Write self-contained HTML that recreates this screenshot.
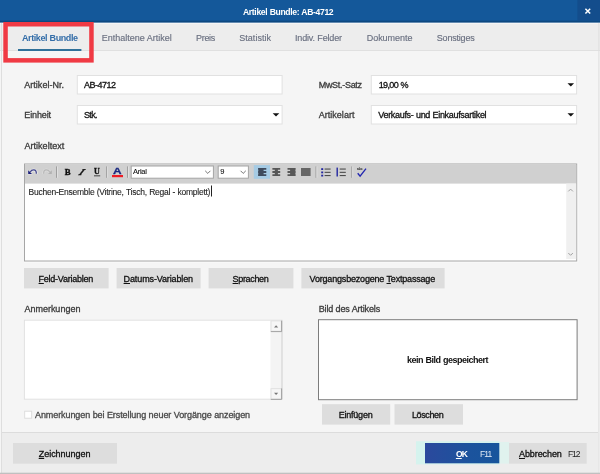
<!DOCTYPE html>
<html lang="de">
<head>
<meta charset="utf-8">
<title>Artikel Bundle: AB-4712</title>
<style>
html,body{margin:0;padding:0;}
body{width:600px;height:474px;overflow:hidden;background:#f5f5f5;font-family:"Liberation Sans",sans-serif;font-size:9px;color:#333;position:relative;}
.abs{position:absolute;}
.t{position:absolute;white-space:nowrap;line-height:12px;-webkit-text-stroke:0.3px currentColor;}
u{text-decoration:underline;text-underline-offset:1px;text-decoration-thickness:0.8px;}
</style>
</head>
<body>
<svg class="abs" style="left:0;top:0;will-change:transform" width="600" height="474" viewBox="0 0 600 474">
<!-- window background -->
<rect x="0" y="0" width="600" height="474" fill="#f5f5f5"/>
<!-- title bar -->
<rect x="0" y="0" width="600" height="22.7" fill="#14589a"/>
<rect x="0" y="20.7" width="600" height="2" fill="#0c4880"/>
<rect x="577.4" y="0" width="22.6" height="20.7" fill="#134d8c"/>
<path d="M585.4 8.7L590.2 13.5M590.2 8.7L585.4 13.5" stroke="#fff" stroke-width="1.5" fill="none"/>
<!-- tab bar -->
<rect x="0" y="22.7" width="600" height="1" fill="#fafafa"/>
<rect x="0" y="23.7" width="600" height="26.3" fill="#ededed"/>
<rect x="0" y="50" width="600" height="1" fill="#e0e0e0"/>
<rect x="18" y="49" width="63.4" height="2" fill="#2f7099"/>
<!-- window borders -->
<rect x="1" y="23" width="1" height="451" fill="#dedede"/>
<rect x="598.4" y="23" width="1" height="451" fill="#dedede"/>

<!-- inputs -->
<g fill="#fff" stroke="#e1e1e1" stroke-width="1">
<rect x="77.3" y="75.5" width="204.8" height="18.5"/>
<rect x="371.3" y="75.5" width="205.3" height="18.5"/>
<rect x="77.3" y="105.5" width="204.8" height="18.5"/>
<rect x="371.3" y="105.5" width="205.3" height="18.5"/>
</g>
<g fill="#111">
<path d="M567.5 83.2h6.6l-3.3 3.4z"/>
<path d="M272.7 113.2h6.6l-3.3 3.4z"/>
<path d="M567.5 113.2h6.6l-3.3 3.4z"/>
</g>

<!-- editor -->
<path d="M24 262H577.7V163.5" fill="none" stroke="#fcfcfc" stroke-width="1"/>
<rect x="24.5" y="164" width="552.2" height="97" fill="#fff" stroke="#a6a6a6" stroke-width="1"/>
<rect x="25" y="164.5" width="551.2" height="19.1" fill="#d0d0d0"/>
<rect x="566.2" y="183.6" width="10" height="75.4" fill="#f0f0f0"/>
<path d="M568.3 191.4L570.6 189.1L572.9 191.4M568.3 253L570.6 255.3L572.9 253" fill="none" stroke="#a2a2a2" stroke-width="1"/>
<rect x="211" y="185.5" width="1" height="11" fill="#222"/>
<g font-family="Liberation Serif, serif">
<!-- undo -->
<path d="M30.2 172 C31.6 169.4 36.6 168.4 36.3 173.8" fill="none" stroke="#eeeeee" stroke-width="3" opacity="0.75"/>
<path d="M27.7 169.6V174.5H32.6Z" fill="#eeeeee" opacity="0.75"/>
<path d="M28.2 170.2V174H32Z" fill="#1c1f7a"/>
<path d="M30.2 172 C31.6 169.4 36.6 168.4 36.3 173.8" fill="none" stroke="#44488f" stroke-width="1.3"/>
<!-- redo -->
<path d="M49.8 172 C48.4 169.4 43.4 168.4 43.7 173.8" fill="none" stroke="#dedede" stroke-width="3" opacity="0.7"/>
<path d="M51.8 170.2V174H48Z" fill="#b2b2b2"/>
<path d="M49.8 172 C48.4 169.4 43.4 168.4 43.7 173.8" fill="none" stroke="#b8b8b8" stroke-width="1.3"/>
<!-- separators -->
<path d="M56.6 166.4V177.8M106.7 166.4V177.8M127.6 166.4V177.8M316 166.4V177.8M351.8 166.4V177.8" stroke="#9a9a9a" stroke-width="1" fill="none"/>
<path d="M57.5 166.4V177.8M107.6 166.4V177.8M128.5 166.4V177.8M316.9 166.4V177.8M352.7 166.4V177.8" stroke="#e4e4e4" stroke-width="0.8" fill="none"/>
<!-- B I U -->
<text x="64.8" y="174.7" font-size="8.8" font-weight="bold" fill="#111" stroke="#111" stroke-width="0.35">B</text>
<text x="0" y="0" font-size="8.8" font-weight="bold" fill="#111" stroke="#111" stroke-width="0.5" transform="translate(78,174.7) skewX(-38)">I</text>
<text x="94" y="174.2" font-size="8" font-weight="bold" fill="#111" stroke="#111" stroke-width="0.3">U</text>
<rect x="94" y="175.4" width="6.2" height="0.9" fill="#333"/>
<!-- A colour -->
<text x="112.9" y="174" font-size="9.4" font-weight="bold" font-family="Liberation Sans, sans-serif" fill="#1b2a80" stroke="#1b2a80" stroke-width="0.3" textLength="8.6" lengthAdjust="spacingAndGlyphs">A</text>
<rect x="112" y="175" width="11" height="2.2" fill="#ee1c24"/>
<!-- combos -->
<rect x="131.2" y="166" width="82.2" height="12.2" fill="#fff" stroke="#a4a4a4" stroke-width="1"/>
<path d="M205.2 170.8L207.8 173.4L210.4 170.8" fill="none" stroke="#666" stroke-width="0.9"/>
<rect x="218.2" y="166" width="30.2" height="12.2" fill="#fff" stroke="#a4a4a4" stroke-width="1"/>
<path d="M240.6 170.8L243.2 173.4L245.8 170.8" fill="none" stroke="#666" stroke-width="0.9"/>
<!-- align buttons -->
<rect x="253.8" y="165.1" width="16.2" height="13.7" fill="#a6cbe4"/>
<g fill="#3f4b5d">
<path d="M258.3 168h8v1.8h-8zM258.3 171.1h8v1.8h-8zM258.3 174.2h8v1.8h-8z"/>
<rect x="258.3" y="168" width="5.3" height="8"/>
</g>
<g fill="#585858">
<path d="M272.4 168h7.8v1.8h-7.8zM272.4 171.1h7.8v1.8h-7.8zM272.4 174.2h7.8v1.8h-7.8z"/>
<rect x="274.8" y="168" width="3.1" height="8"/>
<path d="M287.5 168h7.9v1.8h-7.9zM287.5 171.1h7.9v1.8h-7.9zM287.5 174.2h7.9v1.8h-7.9z"/>
<rect x="290.1" y="168" width="5.3" height="8"/>
<rect x="301" y="168" width="9.6" height="8" fill="#666"/>
</g>
<!-- bullet list / numbered list -->
<g fill="#2226a0">
<rect x="321.2" y="168.2" width="2" height="1.8"/><rect x="321.2" y="171.5" width="2" height="1.8"/><rect x="321.2" y="174.7" width="2" height="1.8"/>
<rect x="336.5" y="167.6" width="1.4" height="8.9"/>
</g>
<g fill="#4c4c4c">
<rect x="324.6" y="168.5" width="6" height="1.1"/><rect x="324.6" y="171.8" width="6" height="1.1"/><rect x="324.6" y="175" width="6" height="1.1"/>
<rect x="339.7" y="168.5" width="6.1" height="1.1"/><rect x="339.7" y="171.8" width="6.1" height="1.1"/><rect x="339.7" y="175" width="6.1" height="1.1"/>
</g>
<!-- spell check -->
<text x="357" y="170.4" font-size="4.4" font-weight="bold" font-family="Liberation Sans, sans-serif" fill="#222" textLength="5.6" lengthAdjust="spacingAndGlyphs">abc</text>
<path d="M357.7 173.3L360.1 176.2L366 168.7" fill="none" stroke="#2226b0" stroke-width="1.35"/>
</g>


<!-- buttons row -->
<g fill="#dddddd">
<rect x="24" y="268" width="84.6" height="20.4"/>
<rect x="116.6" y="268" width="84" height="20.4"/>
<rect x="208.6" y="268" width="84.8" height="20.4"/>
<rect x="301.4" y="268" width="143.2" height="20.4"/>
<rect x="322" y="404.2" width="68.2" height="20.4"/>
<rect x="394.5" y="404.2" width="68.5" height="20.4"/>
<rect x="13" y="443" width="104" height="20.7"/>
</g>

<!-- Anmerkungen -->
<rect x="24.4" y="320.2" width="257.6" height="79" fill="#fff" stroke="#e1e1e1" stroke-width="1"/>
<rect x="270.5" y="320.7" width="11" height="78" fill="#f4f4f4"/>
<g fill="#f6f6f6" stroke="#dcdcdc" stroke-width="0.8">
<rect x="271" y="320.9" width="10.3" height="10.3"/>
<rect x="271" y="388.7" width="10.3" height="10.3"/>
</g>
<path d="M281.9 320.7V399.2" stroke="#d2d2d2" stroke-width="0.9" fill="none"/>
<path d="M281.6 320.7V331.6H270.8M281.6 388.4V399.4H270.8" stroke="#9a9a9a" stroke-width="0.9" fill="none"/>
<path d="M274 327.6h4.2l-2.1-2.3zM274 392.8h4.2l-2.1 2.3z" fill="#777"/>
<rect x="24.7" y="411.2" width="7" height="7" fill="#fff" stroke="#dadada" stroke-width="0.9"/>

<!-- Bild -->
<rect x="318.5" y="319.7" width="258.6" height="80" fill="#fff" stroke="#7c7c7c" stroke-width="1"/>

<!-- footer -->
<rect x="2" y="432.5" width="596" height="40.5" fill="#ededed"/>
<rect x="2" y="432" width="596" height="1" fill="#dcdcdc"/>
<rect x="0" y="472.7" width="600" height="1.3" fill="#c0c0c0"/>
<rect x="13" y="443" width="104" height="20.7" fill="#dddddd"/>
<rect x="499" y="442" width="10.2" height="21.6" fill="#e0f2ee"/>
<rect x="416" y="441.2" width="83.3" height="23.2" fill="#d5f3ee"/>
<defs><linearGradient id="okg" x1="0" x2="1" y1="0" y2="0"><stop offset="0" stop-color="#2b499d"/><stop offset="0.6" stop-color="#1b539d"/><stop offset="1" stop-color="#17559c"/></linearGradient></defs>
<rect x="425" y="443" width="74.3" height="20.3" fill="url(#okg)"/>
<rect x="509" y="443" width="77.7" height="20.7" fill="#dddddd"/>

<!-- red highlight -->
<rect x="5.55" y="24.25" width="85.9" height="36.1" fill="none" stroke="#f03a44" stroke-width="4.5"/>
</svg>

<div id="txt" class="abs" style="left:0;top:0;width:600px;height:474px;will-change:transform;">
<div class="t" style="left:243.0px;top:6.4px;font-size:8.6px;letter-spacing:-0.347px;word-spacing:0.347px;color:#fff;font-weight:bold;-webkit-text-stroke:0;">Artikel Bundle: AB-4712</div>
<div class="t" style="left:22.0px;top:31.9px;font-size:9px;letter-spacing:-0.417px;word-spacing:0.417px;color:#336da8;font-weight:bold;-webkit-text-stroke:0;">Artikel Bundle</div>
<div class="t" style="left:101.7px;top:31.9px;font-size:9px;letter-spacing:-0.003px;word-spacing:0.003px;color:#6a7080;-webkit-text-stroke:0.15px;">Enthaltene Artikel</div>
<div class="t" style="left:196.0px;top:31.9px;font-size:9px;letter-spacing:-0.303px;color:#6a7080;-webkit-text-stroke:0.15px;">Preis</div>
<div class="t" style="left:239.3px;top:31.9px;font-size:9px;letter-spacing:0.020px;color:#6a7080;-webkit-text-stroke:0.15px;">Statistik</div>
<div class="t" style="left:295.0px;top:31.9px;font-size:9px;letter-spacing:-0.172px;word-spacing:0.172px;color:#6a7080;-webkit-text-stroke:0.15px;">Indiv. Felder</div>
<div class="t" style="left:366.7px;top:31.9px;font-size:9px;letter-spacing:-0.026px;color:#6a7080;-webkit-text-stroke:0.15px;">Dokumente</div>
<div class="t" style="left:436.8px;top:31.9px;font-size:9px;letter-spacing:-0.203px;color:#6a7080;-webkit-text-stroke:0.15px;">Sonstiges</div>
<div class="t" style="left:24.3px;top:79.3px;font-size:9px;letter-spacing:0.017px;color:#3a3a3a;">Artikel-Nr.</div>
<div class="t" style="left:84.0px;top:79.3px;font-size:9px;letter-spacing:-0.504px;color:#111;">AB-4712</div>
<div class="t" style="left:318.7px;top:79.3px;font-size:9px;letter-spacing:-0.292px;color:#3a3a3a;">MwSt.-Satz</div>
<div class="t" style="left:378.7px;top:79.3px;font-size:9px;letter-spacing:-0.622px;word-spacing:0.622px;color:#111;">19,00 %</div>
<div class="t" style="left:24.3px;top:109.3px;font-size:9px;letter-spacing:-0.119px;color:#3a3a3a;">Einheit</div>
<div class="t" style="left:84.0px;top:109.3px;font-size:9px;letter-spacing:-0.629px;color:#111;">Stk.</div>
<div class="t" style="left:318.7px;top:109.3px;font-size:9px;letter-spacing:0.028px;color:#3a3a3a;">Artikelart</div>
<div class="t" style="left:378.3px;top:109.3px;font-size:9px;letter-spacing:-0.317px;word-spacing:0.317px;color:#111;">Verkaufs- und Einkaufsartikel</div>
<div class="t" style="left:24.4px;top:139.5px;font-size:9px;letter-spacing:0.044px;color:#3a3a3a;">Artikeltext</div>
<div class="t" style="left:133.0px;top:166.4px;font-size:7.5px;letter-spacing:-0.303px;color:#111;-webkit-text-stroke:0.1px;">Arial</div>
<div class="t" style="left:220.2px;top:166.4px;font-size:7.5px;letter-spacing:-0.372px;color:#111;-webkit-text-stroke:0.1px;">9</div>
<div class="t" style="left:28.6px;top:186.4px;font-size:8.5px;letter-spacing:-0.244px;word-spacing:0.244px;color:#222;-webkit-text-stroke:0.1px;">Buchen-Ensemble (Vitrine, Tisch, Regal - komplett)</div>
<div class="t" style="left:38.6px;top:273.1px;font-size:9px;letter-spacing:-0.248px;color:#111;"><u>F</u>eld-Variablen</div>
<div class="t" style="left:123.6px;top:273.1px;font-size:9px;letter-spacing:-0.123px;color:#111;"><u>D</u>atums-Variablen</div>
<div class="t" style="left:232.6px;top:273.1px;font-size:9px;letter-spacing:-0.343px;color:#111;"><u>S</u>prachen</div>
<div class="t" style="left:309.6px;top:273.1px;font-size:9px;letter-spacing:-0.187px;word-spacing:0.187px;color:#111;">Vorgangsbezogene <u>T</u>extpassage</div>
<div class="t" style="left:24.4px;top:302.9px;font-size:9px;letter-spacing:-0.004px;color:#3a3a3a;">Anmerkungen</div>
<div class="t" style="left:318.7px;top:302.9px;font-size:9px;letter-spacing:-0.149px;word-spacing:0.149px;color:#3a3a3a;">Bild des Artikels</div>
<div class="t" style="left:407.0px;top:354.2px;font-size:9px;letter-spacing:-0.502px;word-spacing:0.502px;color:#111;font-weight:bold;-webkit-text-stroke:0;">kein Bild gespeichert</div>
<div class="t" style="left:35.0px;top:408.9px;font-size:9px;letter-spacing:-0.081px;word-spacing:0.081px;color:#484848;">Anmerkungen bei Erstellung neuer Vorgänge anzeigen</div>
<div class="t" style="left:338.7px;top:408.9px;font-size:9px;letter-spacing:-0.216px;color:#111;">Einfügen</div>
<div class="t" style="left:412.0px;top:408.9px;font-size:9px;letter-spacing:-0.390px;color:#111;">Löschen</div>
<div class="t" style="left:38.7px;top:447.5px;font-size:9px;letter-spacing:-0.022px;color:#111;"><u>Z</u>eichnungen</div>
<div class="t" style="left:455.9px;top:447.6px;font-size:8.5px;letter-spacing:-0.733px;color:#fff;font-weight:bold;-webkit-text-stroke:0;"><u>O</u>K</div>
<div class="t" style="left:480.0px;top:447.6px;font-size:8.5px;letter-spacing:-0.944px;color:#dfe9f5;-webkit-text-stroke:0;">F11</div>
<div class="t" style="left:519.0px;top:447.5px;font-size:9px;letter-spacing:-0.094px;color:#111;"><u>A</u>bbrechen</div>
<div class="t" style="left:567.9px;top:447.7px;font-size:8.5px;letter-spacing:-0.985px;color:#222;-webkit-text-stroke:0;">F12</div>
</div>
</body>
</html>
